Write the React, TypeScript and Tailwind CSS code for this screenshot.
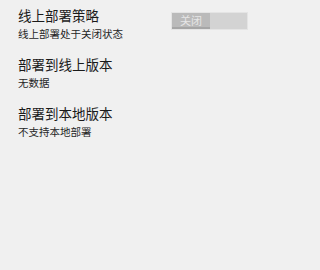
import React from 'react'

const rows = [
    { title: '线上部署策略', desc: '线上部署处于关闭状态', toggle: true },
    { title: '部署到线上版本', desc: '无数据' },
    { title: '部署到本地版本', desc: '不支持本地部署' },
]

const OffSwitch = () => (
    <div className="flex h-[18px] w-[77px] border border-[#e4e4e4] bg-[#d3d3d3]">
        <div className="flex w-[38px] items-center justify-center border-b-2 border-[#a6a6a6] bg-[#bababa] text-[11px] leading-none text-[#e6e6e6]">
            关闭
        </div>
    </div>
)

const App = () => {
    return (
        <div
            className="min-h-screen w-full bg-[#f0f0f0] pl-[18px] pr-[22px] pt-[7px]"
            style={{ fontFamily: '"Noto Sans CJK SC", "Noto Sans", sans-serif' }}
        >
            <div className="w-[230px]">
                {rows.map((row) => (
                    <div key={row.title} className="flex h-[49px] items-start justify-between">
                        <div className="flex flex-col">
                            <span className="text-[13.5px] leading-[17px] text-[#1a1a1a]">{row.title}</span>
                            <span className="mt-[3px] text-[10.5px] leading-[13px] text-[#262626]">{row.desc}</span>
                        </div>
                        {row.toggle && (
                            <div className="mt-[5px]">
                                <OffSwitch />
                            </div>
                        )}
                    </div>
                ))}
            </div>
        </div>
    )
}

export default App
